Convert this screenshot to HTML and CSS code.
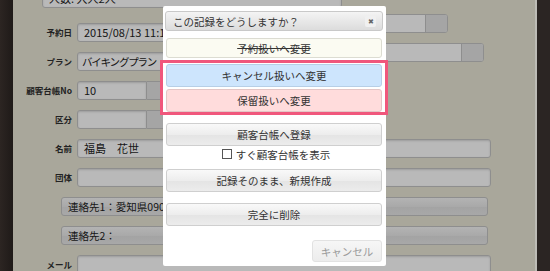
FILE: index.html
```html
<!DOCTYPE html>
<html>
  <head>
    <title>予約記録</title>
    <link rel="stylesheet" href="styles.css">
  </head>
  <body>
    <div class="page">
      <div class="edge-left"></div>
      <main class="panel">
        <div class="row row-top">
          <div class="field wide-top"><span>人数: 大人2人</span></div>
        </div>
        <div class="row">
          <label>予約日</label>
          <div class="field mid"><span>2015/08/13 11:10</span></div>
          <div class="side side-1"><div class="side-btn"></div></div>
        </div>
        <div class="row">
          <label>プラン</label>
          <div class="field mid plan"><span>バイキングプラン</span></div>
          <div class="side side-2"><div class="side-btn"></div></div>
        </div>
        <div class="row">
          <label>顧客台帳No</label>
          <div class="field short"><span>10</span></div>
          <div class="pick"></div>
        </div>
        <div class="row">
          <label>区分</label>
          <div class="field short"></div>
          <div class="pick"></div>
        </div>
        <div class="row">
          <label>名前</label>
          <div class="field full"><span>福島　花世</span></div>
        </div>
        <div class="row">
          <label>団体</label>
          <div class="field full"></div>
        </div>
        <div class="row">
          <div class="contact"><span>連絡先1：愛知県090-1234-5678</span></div>
        </div>
        <div class="row">
          <div class="contact"><span>連絡先2：</span></div>
        </div>
        <div class="row">
          <label>メール</label>
          <div class="field full"></div>
        </div>
      </main>
      <div class="edge-right"></div>
    </div>

    <!-- modal dialog over the form -->
    <div class="dialog">
      <div class="dialog-title">
        <span>この記録をどうしますか？</span>
        <span class="close">✖</span>
      </div>
      <button class="btn btn-cream">予約扱いへ変更</button>
      <div class="highlight">
        <button class="btn btn-blue">キャンセル扱いへ変更</button>
        <button class="btn btn-pink">保留扱いへ変更</button>
      </div>
      <button class="btn btn-gray btn-register">顧客台帳へ登録</button>
      <label class="check"><span class="box"></span>すぐ顧客台帳を表示</label>
      <button class="btn btn-gray btn-new">記録そのまま、新規作成</button>
      <button class="btn btn-gray btn-delete">完全に削除</button>
      <div class="footer">
        <button class="btn btn-cancel">キャンセル</button>
      </div>
    </div>
  </body>
</html>
```

FILE: styles.css
```css
*{
    margin: 0;
    padding: 0;
    box-sizing: border-box;
}
html, body{
    width: 550px;
    height: 271px;
    overflow: hidden;
}
body{
    font-family: "Noto Sans CJK JP", "Noto Sans", sans-serif;
    background-color: #2a2421;
    position: relative;
}
.page{
    display: flex;
    height: 271px;
}
.edge-left{
    width: 13px;
    background: linear-gradient(90deg, #2c2522, #1f1a18);
}
.edge-right{
    width: 15px;
    border-left: 2px solid #bdbcb6;
    background-color: #2b2523;
}
.panel{
    width: 522px;
    background-color: #a9a79b;
    display: flex;
    flex-direction: column;
    gap: 10px;
    overflow: hidden;
}

/* background form rows */
.row{
    display: flex;
    align-items: flex-start;
    height: 19px;
    flex-shrink: 0;
}
.row-top{
    margin-top: -11px;
    margin-bottom: 5px;
}
.row label{
    width: 59px;
    margin-right: 5px;
    text-align: right;
    font-size: 8.5px;
    font-weight: bold;
    color: #222;
    line-height: 19px;
}
.field{
    height: 19px;
    background-color: #b9b9b9;
    border: 1px solid #8e8e8e;
    border-radius: 3px;
    box-shadow: inset 0 1px 2px rgba(0, 0, 0, 0.15);
    font-size: 11px;
    color: #151515;
    line-height: 17px;
    padding-left: 6px;
    white-space: nowrap;
    overflow: hidden;
}
.plan{
    padding-left: 4px;
    font-size: 10.5px;
    letter-spacing: -1.2px;
}
.wide-top{
    margin-left: 29px;
    width: 300px;
}
.mid{
    width: 240px;
}
.short{
    width: 70px;
    border-radius: 3px 0 0 3px;
}
.pick{
    width: 24px;
    height: 19px;
    background-color: #a5a5a5;
    border: 1px solid #8e8e8e;
    border-left: none;
    border-radius: 0 3px 3px 0;
}
.full{
    width: 414px;
}
.side{
    margin-top: -9px;
    margin-left: 13px;
    height: 19px;
    background-color: #b9b9b9;
    border: 1px solid #8e8e8e;
    border-radius: 3px;
    display: flex;
    justify-content: flex-end;
    overflow: hidden;
}
.side-1{
    width: 118px;
}
.side-2{
    width: 154px;
}
.side-btn{
    width: 22px;
    background-color: #a5a5a5;
    border-left: 1px solid #8e8e8e;
}
.contact{
    margin-left: 48px;
    width: 427px;
    height: 19px;
    border: 1px solid #8e8e8e;
    border-radius: 3px;
    background: linear-gradient(#b3b3b3, #a9a9a9 50%, #a3a3a3 51%, #a8a8a8);
    font-size: 10.5px;
    color: #151515;
    line-height: 17px;
    padding-left: 6px;
    white-space: nowrap;
    overflow: hidden;
}

/* dialog */
.dialog{
    position: absolute;
    left: 163px;
    top: 6px;
    width: 223px;
    height: 260px;
    background-color: #fff;
    border-radius: 2px;
    padding: 5px 4px 4px 3px;
    display: flex;
    flex-direction: column;
}
.dialog-title{
    margin: 0 -1px 0 -1px;
    height: 20px;
    border: 1px solid #c9c9c9;
    border-radius: 3px;
    background: linear-gradient(#f4f4f4, #dcdcdc);
    display: flex;
    align-items: center;
    justify-content: space-between;
    padding: 0 6px 0 7px;
    font-size: 10.5px;
    color: #333;
}
.close{
    width: 11px;
    height: 11px;
    background-color: #f0f0f0;
    border-radius: 2px;
    font-size: 7px;
    color: #666;
    text-align: center;
    line-height: 11px;
}
.btn{
    display: block;
    width: 100%;
    height: 23px;
    font-family: "Noto Sans CJK JP", "Noto Sans", sans-serif;
    font-size: 10.5px;
    color: #333;
    border: 1px solid #cfcfcf;
    border-radius: 3px;
    background: linear-gradient(#f9f9f9, #ededed 50%, #e4e4e4 51%, #ececec);
}
.btn-cream{
    margin-top: 7px;
    height: 20px;
    background: #fbfbf2;
    border-color: #dcdcd2;
    text-decoration: line-through;
}
.highlight{
    margin: 2px -6px 0;
    border: 3px solid #f0577c;
    padding: 1px 3px 0;
    display: flex;
    flex-direction: column;
    gap: 2px;
}
.btn-blue{
    background: #cde5fd;
    border-color: #b7cfe6;
}
.btn-pink{
    background: #ffdcdc;
    border-color: #e3c6c6;
}
.btn-register{
    margin-top: 8px;
}
.check{
    display: flex;
    align-items: center;
    justify-content: center;
    gap: 4px;
    height: 16px;
    margin-left: 4px;
    font-size: 10.5px;
    color: #333;
}
.box{
    width: 10px;
    height: 10px;
    border: 1px solid #555;
    background-color: #fff;
}
.btn-new{
    margin-top: 7px;
}
.btn-delete{
    margin-top: 11px;
}
.footer{
    margin-top: 14px;
    display: flex;
    justify-content: flex-end;
}
.btn-cancel{
    width: 70px;
    height: 22px;
    color: #9a9a9a;
    background: linear-gradient(#f6f6f6, #ececec);
    border-color: #e2e2e2;
}
```
